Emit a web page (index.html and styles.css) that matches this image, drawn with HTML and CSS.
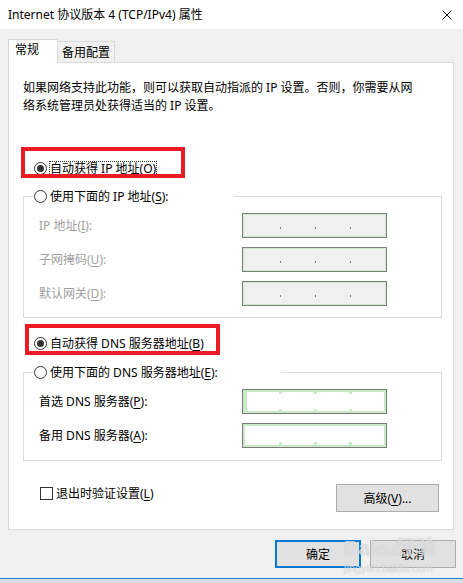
FILE: index.html
```html
<!DOCTYPE html>
<html lang="zh-CN">
<head>
    <meta charset="UTF-8">
    <meta name="viewport" content="width=device-width, initial-scale=1.0">
    <title>Internet 协议版本 4 (TCP/IPv4) 属性</title>
    <link rel="stylesheet" href="styles.css">
</head>
<body>
    <div class="window">
        <div class="titlebar">
            <span class="title">Internet 协议版本 4 (TCP/IPv4) 属性</span>
            <svg class="close" width="10" height="10" viewBox="0 0 10 10">
                <path d="M0.5 0.5L9.5 9.5M9.5 0.5L0.5 9.5" stroke="#111" stroke-width="1" fill="none"/>
            </svg>
        </div>

        <div class="content">
            <div class="tabs">
                <div class="tab active">常规</div>
                <div class="tab">备用配置</div>
            </div>

            <div class="panel">
                <p class="intro">如果网络支持此功能，则可以获取自动指派的 IP 设置。否则，你需要从网<br>络系统管理员处获得适当的 IP 设置。</p>

                <div class="option first">
                    <span class="radio checked"></span>
                    <span class="focus">自动获得 IP 地址(<u>O</u>)</span>
                    <div class="mark mark-ip"></div>
                </div>

                <div class="group group-ip">
                    <div class="group-head head-ip">
                        <span class="radio"></span>
                        <span>使用下面的 IP 地址(<u>S</u>):</span>
                    </div>
                    <div class="fields disabled">
                        <span class="field-label">IP 地址(<u>I</u>):</span>
                        <div class="ip-box grey"><span></span><i></i><span></span><i></i><span></span><i></i><span></span></div>
                        <span class="field-label">子网掩码(<u>U</u>):</span>
                        <div class="ip-box grey"><span></span><i></i><span></span><i></i><span></span><i></i><span></span></div>
                        <span class="field-label">默认网关(<u>D</u>):</span>
                        <div class="ip-box grey"><span></span><i></i><span></span><i></i><span></span><i></i><span></span></div>
                    </div>
                </div>

                <div class="option second">
                    <span class="radio checked"></span>
                    <span>自动获得 DNS 服务器地址(<u>B</u>)</span>
                    <div class="mark mark-dns"></div>
                </div>

                <div class="group group-dns">
                    <div class="group-head head-dns">
                        <span class="radio"></span>
                        <span>使用下面的 DNS 服务器地址(<u>E</u>):</span>
                    </div>
                    <div class="fields">
                        <span class="field-label">首选 DNS 服务器(<u>P</u>):</span>
                        <div class="ip-box white first-dns"><span></span><b></b><span></span><b></b><span></span><b></b><span></span></div>
                        <span class="field-label">备用 DNS 服务器(<u>A</u>):</span>
                        <div class="ip-box white second-dns"><span></span><b></b><span></span><b></b><span></span><b></b><span></span></div>
                    </div>
                </div>

                <div class="bottom-row">
                    <label class="check-row">
                        <span class="checkbox"></span>
                        <span>退出时验证设置(<u>L</u>)</span>
                    </label>
                    <button class="btn advanced">高级(<u>V</u>)...</button>
                </div>
            </div>

            <div class="actions">
                <button class="btn ok">确定</button>
                <button class="btn">取消</button>
            </div>
        </div>

        <div class="watermark">
            <span class="wm-logo">Bai<span class="wm-du">du</span>经验</span>
            <span class="wm-url">jingyan.baidu.com</span>
        </div>
    </div>
</body>
</html>
```

FILE: styles.css
```css
html, body {
    margin: 0;
    padding: 0;
}
body {
    width: 463px;
    height: 583px;
    overflow: hidden;
    background: linear-gradient(#c9c9c9, #dcdcdc);
    font-family: "Noto Sans", "Noto Sans CJK SC", sans-serif;
    font-size: 12px;
    line-height: 19px;
    color: #000;
}
u {
    text-decoration: underline;
    text-underline-offset: 2px;
}
.window {
    position: relative;
    height: 578px;
    background: #f0f0f0;
    border-bottom: 1px solid #1883d7;
}
.titlebar {
    height: 29px;
    background: #ffffff;
    display: flex;
    align-items: center;
    justify-content: space-between;
    padding: 0 11px 0 8px;
}
.close {
    display: block;
}
.content {
    padding-top: 10px;
}

/* tabs */
.tabs {
    display: flex;
    align-items: flex-end;
    margin-left: 8px;
}
.tab {
    box-sizing: border-box;
    height: 21px;
    padding: 0 4px 0 4px;
    border: 1px solid #d9d9d9;
    border-bottom: none;
    background: #f0f0f0;
    line-height: 21px;
    margin-left: -1px;
}
.tab.active {
    position: relative;
    z-index: 1;
    height: 24px;
    width: 50px;
    margin-left: 0;
    margin-bottom: -1px;
    padding-left: 6px;
    background: #ffffff;
    line-height: 20px;
}

/* main panel */
.panel {
    box-sizing: border-box;
    width: 446px;
    margin-left: 8px;
    padding: 16px 0 17px 0;
    background: #ffffff;
    border: 1px solid #d9d9d9;
}
.intro {
    margin: 0 0 0 14px;
    line-height: 18px;
}
.option {
    position: relative;
    display: flex;
    align-items: center;
    gap: 3px;
    height: 19px;
    margin-left: 25px;
}
.option.first {
    margin-top: 44px;
}
.option.second {
    margin-top: 16px;
}
.focus {
    outline: 1px dotted #333;
    outline-offset: -1px;
    line-height: 15px;
    padding: 0 1px;
    margin-left: -1px;
}
.radio {
    box-sizing: border-box;
    flex: none;
    width: 13px;
    height: 13px;
    border: 1px solid #333;
    border-radius: 50%;
    background: #fff;
    display: flex;
    align-items: center;
    justify-content: center;
}
.radio.checked::after {
    content: "";
    width: 7px;
    height: 7px;
    border-radius: 50%;
    background: #333;
}

/* red annotation boxes drawn over the dialog */
.mark {
    position: absolute;
    border: 4px solid #ed1c24;
    box-sizing: border-box;
    height: 31px;
    pointer-events: none;
}
.mark-ip {
    left: -13px;
    top: -12px;
    width: 164px;
}
.mark-dns {
    left: -9px;
    top: -10px;
    width: 195px;
}

/* group boxes */
.group {
    margin: 18px 11px 0 14px;
    border: 1px solid #dcdcdc;
    padding-bottom: 11px;
}
.group-dns {
    margin-top: 19px;
    padding-bottom: 12px;
}
.group-head {
    display: flex;
    align-items: center;
    gap: 3px;
    height: 19px;
    margin: -10px 0 0 10px;
    background: #ffffff;
}
.head-ip {
    width: 200px;
}
.head-dns {
    width: 247px;
}
.fields {
    display: grid;
    grid-template-columns: 203px 145px;
    row-gap: 9px;
    align-items: center;
    padding-left: 15px;
    margin-top: 7px;
}
.fields.disabled .field-label {
    color: #a0a0a0;
}
.ip-box {
    box-sizing: border-box;
    height: 25px;
    border: 1px solid #7a7a7a;
    display: grid;
    grid-template-columns: 36px 3px 32px 3px 32px 3px 1fr;
}
.ip-box.grey {
    background: #f0f0f0;
    border-color: #778477;
    box-shadow: inset 0 0 0 1px #cfe8cf;
}
.ip-box.grey i {
    align-self: center;
    justify-self: center;
    width: 1px;
    height: 2px;
    margin-top: 5px;
    background: #7080a0;
}
.ip-box.white {
    background: #ffffff;
    box-shadow: inset 0 0 0 2px #c6ecc6;
}
.ip-box.first-dns {
    box-shadow: inset 4px 0 0 #c6ecc6, inset 0 0 0 2px #c6ecc6;
}
.ip-box.first-dns b {
    background: linear-gradient(#c6ecc6 0 4px, transparent 4px calc(100% - 4px), #c6ecc6 calc(100% - 4px));
}
.ip-box.second-dns b {
    background: linear-gradient(transparent 0 calc(100% - 5px), #c6ecc6 calc(100% - 5px));
}

/* bottom row */
.bottom-row {
    display: flex;
    justify-content: space-between;
    align-items: flex-start;
    margin-top: 23px;
    padding: 0 14px 0 31px;
}
.check-row {
    display: flex;
    align-items: center;
    gap: 3px;
    height: 19px;
}
.checkbox {
    box-sizing: border-box;
    width: 13px;
    height: 13px;
    border: 1px solid #333;
    background: #fff;
}
.btn {
    box-sizing: border-box;
    width: 86px;
    height: 28px;
    padding: 0;
    font: inherit;
    color: #000;
    background: #e1e1e1;
    border: 1px solid #adadad;
}
.btn.advanced {
    width: 103px;
}
.btn.ok {
    border: 2px solid #0078d7;
}
.actions {
    display: flex;
    justify-content: flex-end;
    gap: 9px;
    margin-top: 10px;
    padding-right: 7px;
}

/* faint watermark over the buttons */
.watermark {
    position: absolute;
    left: 344px;
    top: 536px;
    display: flex;
    flex-direction: column;
    pointer-events: none;
    color: rgba(255, 255, 255, 0.55);
    text-shadow: 0 0 1px rgba(150, 150, 150, 0.6);
}
.wm-logo {
    font-family: "Liberation Sans", "Noto Sans CJK SC", sans-serif;
    font-weight: bold;
    font-size: 20px;
    line-height: 24px;
}
.wm-du {
    font-size: 17px;
}
.wm-url {
    font-family: "Liberation Sans", sans-serif;
    font-size: 11px;
    line-height: 13px;
}
```
